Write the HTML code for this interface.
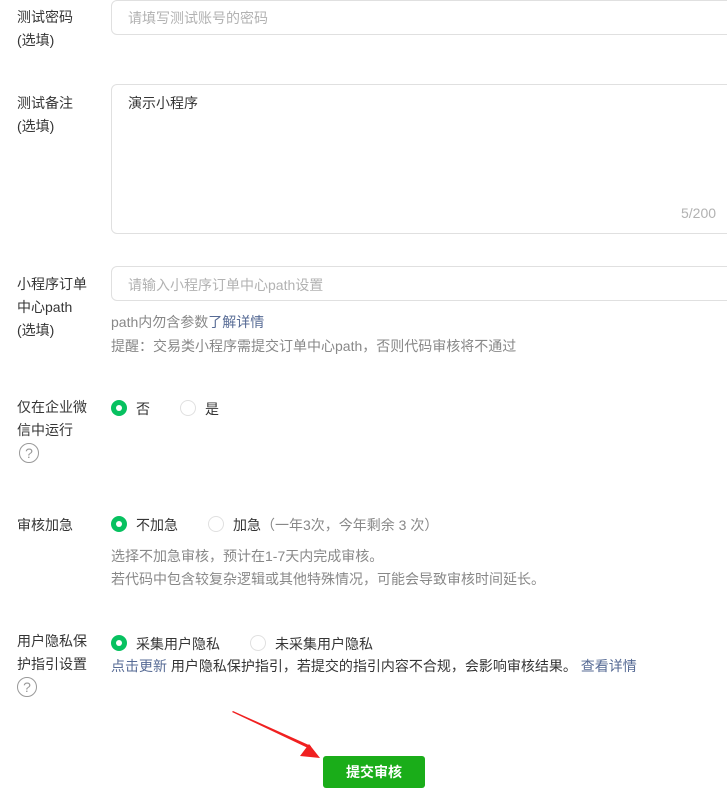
<!DOCTYPE html>
<html><head><meta charset="utf-8"><style>
body{margin:0;width:727px;height:800px;position:relative;background:#fff;font-family:"Liberation Sans","Noto Sans CJK SC",sans-serif;font-size:14px;color:#353535;overflow:hidden}
.a{position:absolute;white-space:nowrap}
.lbl{line-height:23px}
.box{position:absolute;left:111px;width:630px;border:1px solid #e0e0e0;border-radius:6px;box-sizing:border-box}
.ph{color:#b2b2b2}
.g{color:#888}
.lk{color:#576b95}
.r{position:absolute;width:16px;height:16px;border-radius:50%;box-sizing:border-box}
.on{background:#07c160}
.on::after{content:"";position:absolute;left:5px;top:5px;width:6px;height:6px;border-radius:50%;background:#fff}
.off{border:1px solid #e0e0e0;background:#fff}
.q{position:absolute;width:20px;height:20px;border:1px solid #999;border-radius:50%;box-sizing:border-box;color:#999;font-size:14px;text-align:center;line-height:18px}
</style></head><body>
<div class="a lbl" style="left:17px;top:6px">测试密码<br>(选填)</div>
<div class="box" style="top:0;height:35px"></div>
<div class="a ph" style="left:128px;top:8px">请填写测试账号的密码</div>

<div class="a lbl" style="left:17px;top:92px">测试备注<br>(选填)</div>
<div class="box" style="top:84px;height:150px"></div>
<div class="a" style="left:128px;top:93px">演示小程序</div>
<div class="a ph" style="left:681px;top:205px">5/200</div>

<div class="a lbl" style="left:17px;top:273px">小程序订单<br>中心path<br>(选填)</div>
<div class="box" style="top:266px;height:35px"></div>
<div class="a ph" style="left:128px;top:275px">请输入小程序订单中心path设置</div>
<div class="a g" style="left:111px;top:312px">path内勿含参数<span class="lk">了解详情</span></div>
<div class="a g" style="left:111px;top:336px">提醒：交易类小程序需提交订单中心path，否则代码审核将不通过</div>

<div class="a lbl" style="left:17px;top:396px">仅在企业微<br>信中运行</div>
<div class="q" style="left:19px;top:443px">?</div>
<div class="r on" style="left:111px;top:400px"></div><div class="a" style="left:136px;top:399px">否</div>
<div class="r off" style="left:180px;top:400px"></div><div class="a" style="left:205px;top:399px">是</div>

<div class="a" style="left:17px;top:515px">审核加急</div>
<div class="r on" style="left:111px;top:516px"></div><div class="a" style="left:136px;top:515px">不加急</div>
<div class="r off" style="left:208px;top:516px"></div><div class="a" style="left:233px;top:515px">加急<span class="g">（一年3次，今年剩余 3 次）</span></div>
<div class="a g" style="left:111px;top:546px">选择不加急审核，预计在1-7天内完成审核。</div>
<div class="a g" style="left:111px;top:569px">若代码中包含较复杂逻辑或其他特殊情况，可能会导致审核时间延长。</div>

<div class="a lbl" style="left:17px;top:630px">用户隐私保<br>护指引设置</div>
<div class="q" style="left:17px;top:677px">?</div>
<div class="r on" style="left:111px;top:635px"></div><div class="a" style="left:136px;top:634px">采集用户隐私</div>
<div class="r off" style="left:250px;top:635px"></div><div class="a" style="left:275px;top:634px">未采集用户隐私</div>
<div class="a" style="left:111px;top:656px"><span class="lk">点击更新</span> 用户隐私保护指引，若提交的指引内容不合规，会影响审核结果。 <span class="lk">查看详情</span></div>

<svg class="a" style="left:0;top:0" width="727" height="800"><polygon points="232,712 310,749 311,746 233,711" fill="#f02020"/><polygon points="320,758 300,756 309,744" fill="#f02020"/></svg>
<div class="a" style="left:323px;top:756px;width:102px;height:32px;background:#1aad19;border-radius:3px;color:#fff;font-weight:bold;font-size:14px;text-align:center;line-height:32px">提交审核</div>
</body></html>
